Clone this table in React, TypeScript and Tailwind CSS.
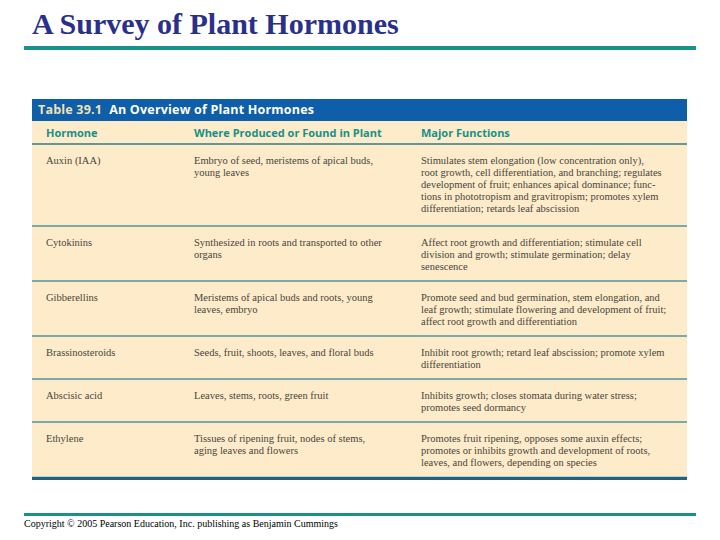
import React from "react";

const rows: { h: string[]; w: string[]; f: string[] }[] = [
  {
    h: ["Auxin (IAA)"],
    w: ["Embryo of seed, meristems of apical buds,", "young leaves"],
    f: [
      "Stimulates stem elongation (low concentration only),",
      "root growth, cell differentiation, and branching; regulates",
      "development of fruit; enhances apical dominance; func-",
      "tions in phototropism and gravitropism; promotes xylem",
      "differentiation; retards leaf abscission",
    ],
  },
  {
    h: ["Cytokinins"],
    w: ["Synthesized in roots and transported to other", "organs"],
    f: [
      "Affect root growth and differentiation; stimulate cell",
      "division and growth; stimulate germination; delay",
      "senescence",
    ],
  },
  {
    h: ["Gibberellins"],
    w: ["Meristems of apical buds and roots, young", "leaves, embryo"],
    f: [
      "Promote seed and bud germination, stem elongation, and",
      "leaf growth; stimulate flowering and development of fruit;",
      "affect root growth and differentiation",
    ],
  },
  {
    h: ["Brassinosteroids"],
    w: ["Seeds, fruit, shoots, leaves, and floral buds"],
    f: [
      "Inhibit root growth; retard leaf abscission; promote xylem",
      "differentiation",
    ],
  },
  {
    h: ["Abscisic acid"],
    w: ["Leaves, stems, roots, green fruit"],
    f: [
      "Inhibits growth; closes stomata during water stress;",
      "promotes seed dormancy",
    ],
  },
  {
    h: ["Ethylene"],
    w: ["Tissues of ripening fruit, nodes of stems,", "aging leaves and flowers"],
    f: [
      "Promotes fruit ripening, opposes some auxin effects;",
      "promotes or inhibits growth and development of roots,",
      "leaves, and flowers, depending on species",
    ],
  },
];

function Lines({ lines }: { lines: string[] }) {
  return (
    <div>
      {lines.map((l, i) => (
        <div key={i} className="whitespace-nowrap">
          {l}
        </div>
      ))}
    </div>
  );
}

export default function App() {
  return (
    <div className="w-[720px] h-[540px] bg-white overflow-hidden">
      <div className="pl-[32px] pt-[9px] h-[46px]">
        <div
          className="text-[30px] leading-none font-bold text-[#2b2f8c]"
          style={{ fontFamily: '"Liberation Serif", serif' }}
        >
          A Survey of Plant Hormones
        </div>
      </div>
      <div className="mx-[24px] h-[4px] bg-[#18918c]" />
      <div className="ml-[32px] mt-[49px] w-[655px]">
        <div
          className="h-[22px] bg-[#0e5ea9] flex items-center pl-[6px] pt-[1px] text-[12.5px] tracking-[0.2px] font-bold text-white"
          style={{ fontFamily: '"Open Sans", sans-serif' }}
        >
          <span className="text-[#f3e2ae]">Table 39.1</span>
          <span className="ml-[7px]">An Overview of Plant Hormones</span>
        </div>
        <div
          className="bg-[#fdebc9] grid grid-cols-[162px_227px_1fr] h-[24px] pt-[3px] items-center text-[11px] font-bold text-[#17908a] border-b-2 border-[#5f9a98]"
          style={{ fontFamily: '"Open Sans", sans-serif' }}
        >
          <div className="pl-[14px]">Hormone</div>
          <div>Where Produced or Found in Plant</div>
          <div>Major Functions</div>
        </div>
        <div
          className="bg-[#fdebc9] text-[10.5px] leading-[12px] text-[#4a4540]"
          style={{ fontFamily: '"Liberation Serif", serif' }}
        >
          {rows.map((r, i) => (
            <div
              key={i}
              className={
                "grid grid-cols-[162px_227px_1fr] pt-[10px] " +
                (i === 0 ? "pb-[10px] " : "pb-[7px] ") +
                (i < rows.length - 1 ? "border-b-2 border-[#7aaba8]" : "")
              }
            >
              <div className="pl-[14px]">
                <Lines lines={r.h} />
              </div>
              <Lines lines={r.w} />
              <Lines lines={r.f} />
            </div>
          ))}
        </div>
        <div className="h-[1px] bg-[#a9d8e6]" />
        <div className="h-[3px] bg-[#2b5f77]" />
      </div>
      <div className="mx-[24px] mt-[33px] h-[3px] bg-[#18918c]" />
      <div
        className="pl-[24px] pt-[2px] text-[10px] leading-[12px] text-black"
        style={{ fontFamily: '"Liberation Serif", serif' }}
      >
        Copyright © 2005 Pearson Education, Inc. publishing as Benjamin Cummings
      </div>
    </div>
  );
}
